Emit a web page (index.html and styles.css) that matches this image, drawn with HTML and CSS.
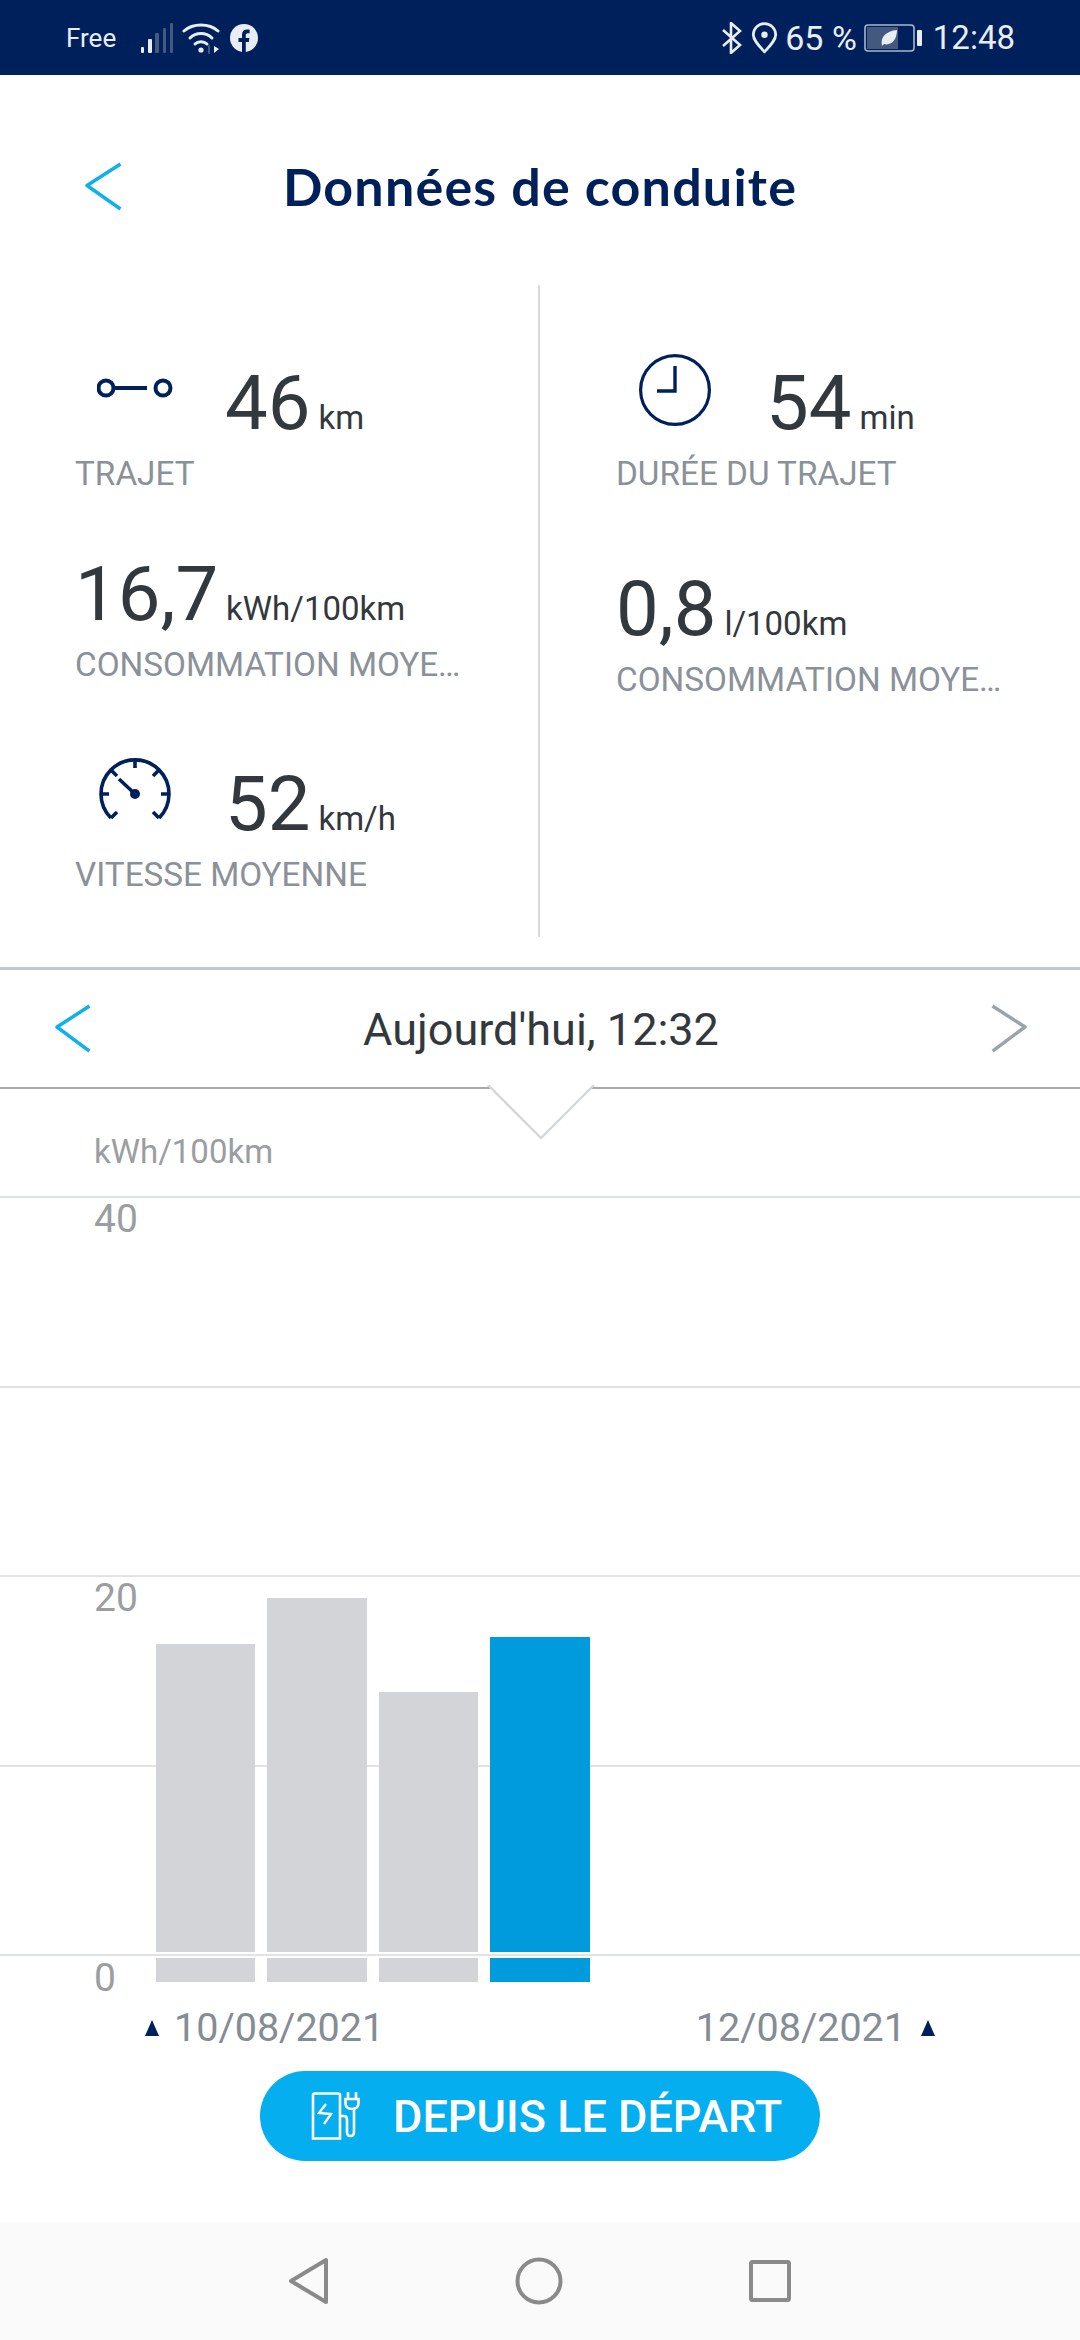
FILE: index.html
```html
<!DOCTYPE html>
<html lang="fr">

  <head>
    <meta charset="utf-8">
    <title>Données de conduite</title>
    <link rel="stylesheet" href="styles.css">
  </head>

  <body>
    <!-- Barre d'état -->
    <div class="status-bar">
      <div class="status-left">
        <span class="carrier">Free</span>
        <svg class="ic-signal" width="33" height="30" viewBox="0 0 33 30">
          <rect x="0" y="24" width="3" height="6" rx="1" fill="#e8edf5"/>
          <rect x="7" y="16" width="4" height="14" rx="1" fill="#e8edf5"/>
          <rect x="14" y="10" width="4" height="20" rx="1" fill="#43597f"/>
          <rect x="22" y="5" width="3" height="25" rx="1" fill="#43597f"/>
          <rect x="29" y="0" width="3" height="30" rx="1" fill="#43597f"/>
        </svg>
        <svg class="ic-wifi" width="38" height="32" viewBox="0 0 38 32" fill="none" stroke="#e8edf5" stroke-width="3" stroke-linecap="round">
          <path d="M2 9 C11 1 27 1 36 9"/>
          <path d="M8 16 C14 10 24 10 30 16"/>
          <path d="M13 22 C16 19 22 19 25 22"/>
          <circle cx="19" cy="28" r="2.6" fill="#e8edf5" stroke="none"/>
          <path d="M32 24 V31 L37 27 Z" fill="#e8edf5" stroke="none"/>
          <path d="M27 24 V31" stroke="#43597f" stroke-width="2"/>
        </svg>
        <svg class="ic-fb" width="28" height="28" viewBox="0 0 28 28">
          <circle cx="14" cy="14" r="14" fill="#e8edf5"/>
          <path d="M12 28 V18 H8.5 V14 H12 V10.8 C12 7.4 14 5.6 17 5.6 C18.4 5.6 19.6 5.8 19.6 5.8 V9.2 H17.9 C16.2 9.2 15.8 10.2 15.8 11.2 V14 H19.4 L18.8 18 H15.8 V28 Z" fill="#00205b"/>
        </svg>
      </div>
      <div class="status-right">
        <svg class="ic-bt" width="20" height="32" viewBox="0 0 20 32" fill="none" stroke="#e8edf5" stroke-width="2.6">
          <path d="M1 8 L18 23 L9 31 V1 L18 9 L1 24"/>
        </svg>
        <svg class="ic-pin" width="27" height="32" viewBox="0 0 25 30" fill="none">
          <path d="M12.5 28 C7 22 2 17 2 12 A10.5 10.5 0 0 1 23 12 C23 17 18 22 12.5 28 Z" stroke="#e8edf5" stroke-width="2.6" stroke-linejoin="round"/>
          <circle cx="12.5" cy="12" r="3" fill="#e8edf5"/>
        </svg>
        <span class="battery-text">65 %</span>
        <svg class="ic-battery" width="58" height="28" viewBox="0 0 58 28">
          <rect x="1" y="1" width="49" height="26" rx="3" fill="none" stroke="#a9b6cc" stroke-width="1.6"/>
          <rect x="3" y="3" width="31" height="22" fill="#43597f"/>
          <rect x="53" y="6" width="5" height="16" rx="1" fill="#e8edf5"/>
          <path d="M18 22 C16 13 22 7 33 6 C33 16 27 22 20 20 Z" fill="#e8edf5"/>
        </svg>
        <span class="clock-text">12:48</span>
      </div>
    </div>

    <!-- En-tête -->
    <div class="header">
      <svg class="chevron-back" width="38" height="50" viewBox="0 0 38 50" fill="none" stroke="#0fb0ec" stroke-width="3.5" stroke-linecap="square" stroke-linejoin="round">
        <path d="M35 3 L3 23.5 L35 46"/>
      </svg>
      <h1 class="title">Données de conduite</h1>
    </div>

    <!-- Statistiques -->
    <div class="stats">
      <div class="stats-col">
        <div class="stat stat-trip">
          <div class="stat-main">
            <div class="stat-icon">
              <svg class="ic-trip" width="76" height="24" viewBox="0 0 76 24" fill="none" stroke="#00205b" stroke-width="4">
                <circle cx="9" cy="12" r="7.5"/>
                <path d="M16 12 H50"/>
                <circle cx="66" cy="12" r="7.5"/>
              </svg>
            </div>
            <span class="num">46</span><span class="unit">km</span>
          </div>
          <div class="stat-label">TRAJET</div>
        </div>
        <div class="stat stat-cons">
          <div class="stat-main">
            <span class="num">16,7</span><span class="unit">kWh/100km</span>
          </div>
          <div class="stat-label">CONSOMMATION MOYE…</div>
        </div>
        <div class="stat stat-speed">
          <div class="stat-main">
            <div class="stat-icon">
              <svg class="ic-gauge" width="72" height="64" viewBox="0 0 72 64" fill="none" stroke="#00205b" stroke-width="3.6">
                <path d="M12 60 A34 34 0 1 1 60 60"/>
                <path d="M36 2 V10 M12 12 L18 18 M60 12 L54 18 M2 36 H10 M70 36 H62 M12 60 L18 54 M60 60 L54 54"/>
                <path d="M20 21 L36 36" stroke-width="3.6"/>
                <circle cx="36" cy="36" r="5" fill="#00205b" stroke="none"/>
              </svg>
            </div>
            <span class="num">52</span><span class="unit">km/h</span>
          </div>
          <div class="stat-label">VITESSE MOYENNE</div>
        </div>
      </div>

      <div class="stats-col stats-col-right">
        <div class="stat stat-time">
          <div class="stat-main">
            <div class="stat-icon">
              <svg class="ic-clock" width="72" height="72" viewBox="0 0 72 72" fill="none" stroke="#00205b" stroke-width="3.2">
                <circle cx="36" cy="36" r="34.4"/>
                <path d="M36 12 V37 H18" stroke-width="3.4"/>
              </svg>
            </div>
            <span class="num">54</span><span class="unit">min</span>
          </div>
          <div class="stat-label">DURÉE DU TRAJET</div>
        </div>
        <div class="stat stat-fuel">
          <div class="stat-main">
            <span class="num">0,8</span><span class="unit">l/100km</span>
          </div>
          <div class="stat-label">CONSOMMATION MOYE…</div>
        </div>
      </div>
    </div>

    <!-- Sélecteur de trajet -->
    <div class="date-row">
      <svg class="chevron" width="38" height="50" viewBox="0 0 38 50" fill="none" stroke="#0fb0ec" stroke-width="3.5" stroke-linecap="square" stroke-linejoin="round">
        <path d="M34 3 L3 23 L34 46"/>
      </svg>
      <span class="date-text">Aujourd'hui, 12:32</span>
      <svg class="chevron" width="38" height="50" viewBox="0 0 38 50" fill="none" stroke="#9aa5aa" stroke-width="3.5" stroke-linecap="square" stroke-linejoin="round">
        <path d="M4 3 L35 23 L4 46"/>
      </svg>
      <svg class="notch" width="108" height="56" viewBox="0 0 108 56">
        <path d="M1 0 L54 53 L107 0 Z" fill="#fff"/>
        <path d="M1 0 L54 53 L107 0" fill="none" stroke="#d4d8db" stroke-width="2.4"/>
      </svg>
    </div>

    <div class="chart-unit">kWh/100km</div>

    <!-- Graphique -->
    <div class="chart">
      <div class="grid-row"><span class="axis-label">40</span></div>
      <div class="grid-row"></div>
      <div class="grid-row"><span class="axis-label">20</span></div>
      <div class="grid-row"></div>
      <div class="grid-row grid-row-last"><span class="axis-label">0</span></div>
      <div class="bars">
        <div class="bar" style="height: 338px"></div>
        <div class="bar" style="height: 384px"></div>
        <div class="bar" style="height: 290px"></div>
        <div class="bar bar-active" style="height: 345px"></div>
      </div>
      <div class="zero-line"></div>
    </div>

    <div class="chart-dates">
      <div class="chart-date"><i class="tick"></i><span>10/08/2021</span></div>
      <div class="chart-date"><span>12/08/2021</span><i class="tick"></i></div>
    </div>

    <button class="pill">
      <svg class="ic-charge" width="50" height="48" viewBox="0 0 50 48" fill="none" stroke="#fff" stroke-width="2.6">
        <path d="M2 46.5 V3 Q2 1.5 3.5 1.5 H27 Q29 1.5 29 3 V46.5 Z"/>
        <path d="M15 12 L8 21 L20 22 L13 32" stroke-width="2.4"/>
        <path d="M29 24 H33 Q36 24 36 28 V40 Q36 44 39.5 44 Q43 44 43 40 V18"/>
        <path d="M37 0 V7 M45 0 V7"/>
        <path d="M34.5 7 H47.5 V11 Q47.5 17 41 17 Q34.5 17 34.5 11 Z"/>
      </svg>
      <span>DEPUIS LE DÉPART</span>
    </button>

    <!-- Navigation système -->
    <div class="nav-bar">
      <svg width="42" height="48" viewBox="0 0 42 48" fill="none" stroke="#8a8a8a" stroke-width="4" stroke-linejoin="round">
        <path d="M38 3 V45 L3 24 Z"/>
      </svg>
      <svg width="48" height="48" viewBox="0 0 48 48" fill="none" stroke="#8a8a8a" stroke-width="4">
        <circle cx="24" cy="24" r="21.5"/>
      </svg>
      <svg width="44" height="44" viewBox="0 0 44 44" fill="none" stroke="#8a8a8a" stroke-width="4" stroke-linejoin="round">
        <rect x="3" y="3" width="38" height="38" rx="1.5"/>
      </svg>
    </div>
  </body>

</html>
```

FILE: styles.css
```css
* {
  box-sizing: border-box;
}

html, body {
  margin: 0;
  padding: 0;
}

body {
  width: 1080px;
  height: 2340px;
  display: flex;
  flex-direction: column;
  overflow: hidden;
  background: #fff;
  font-family: Roboto, "Liberation Sans", sans-serif;
  color: #33383c;
}

/* Barre d'état */
.status-bar {
  height: 75px;
  flex: none;
  display: flex;
  justify-content: space-between;
  align-items: center;
  padding: 0 65px 0 66px;
  background: #00205b;
  color: #e8edf5;
}

.status-left, .status-right {
  display: flex;
  align-items: center;
}

.carrier {
  font-size: 26px;
  width: 75px;
}

.ic-wifi {
  margin-left: 8px;
}

.ic-fb {
  margin-left: 10px;
}

.ic-pin {
  margin-left: 9px;
}

.battery-text {
  margin-left: 7px;
  font-size: 34px;
}

.ic-battery {
  margin-left: 7px;
}

.clock-text {
  margin-left: 11px;
  font-size: 33px;
}

/* En-tête */
.header {
  height: 210px;
  flex: none;
  position: relative;
  display: flex;
  justify-content: center;
  align-items: center;
  padding-top: 12px;
}

.chevron-back {
  position: absolute;
  left: 84px;
  top: 87px;
}

.title {
  margin: 0;
  font-family: Lato, sans-serif;
  font-weight: 700;
  font-size: 52px;
  letter-spacing: 1.2px;
  color: #00205b;
}

/* Statistiques */
.stats {
  height: 652px;
  flex: none;
  display: flex;
}

.stats-col {
  width: 540px;
  padding-left: 75px;
  border-right: 2px solid #d9dcde;
}

.stats-col-right {
  padding-left: 76px;
  border-right: none;
}

.stat-main {
  display: flex;
  align-items: baseline;
  height: 80px;
  line-height: 80px;
}

.stat-icon {
  width: 150px;
  height: 80px;
  flex: none;
  align-self: flex-start;
  position: relative;
}

.stat-icon svg {
  position: absolute;
}

.ic-trip {
  left: 22px;
  top: 13px;
}

.ic-gauge {
  left: 24px;
  top: -6px;
}

.ic-clock {
  left: 23px;
  top: -9px;
}

.num {
  font-size: 76px;
}

.unit {
  margin-left: 8px;
  font-size: 33px;
}

.stat-label {
  margin-top: 11px;
  font-size: 33.3px;
  line-height: 40px;
  color: #8a9199;
  white-space: nowrap;
}

.stat-trip {
  padding-top: 78px;
}

.stat-cons {
  margin-top: 60px;
}

.stat-speed {
  margin-top: 79px;
}

.stat-time {
  padding-top: 78px;
}

.stat-fuel {
  margin-top: 75px;
}

/* Sélecteur de trajet */
.date-row {
  height: 122px;
  flex: none;
  margin-top: 30px;
  padding: 0 52px 0 54px;
  position: relative;
  display: flex;
  justify-content: space-between;
  align-items: center;
  border-top: 3px solid #c0c8ce;
  border-bottom: 2px solid #a8a8a8;
}

.date-text {
  font-size: 45px;
  margin-top: 2px;
}

.notch {
  position: absolute;
  left: 487px;
  top: 100%;
  margin-top: -2px;
}

.chart-unit {
  height: 107px;
  flex: none;
  padding: 43px 0 0 94px;
  font-size: 33px;
  line-height: 40px;
  color: #9a9ea1;
}

/* Graphique */
.chart {
  height: 786px;
  flex: none;
  position: relative;
}

.grid-row {
  height: 189.5px;
  padding: 1px 0 0 94px;
  border-top: 2px solid #e0e3e5;
}

.grid-row-last {
  height: 28px;
  padding-top: 4px;
  border-top: none;
}

.axis-label {
  display: block;
  font-size: 39px;
  line-height: 40px;
  color: #9a9ea1;
}

.bars {
  position: absolute;
  left: 156px;
  bottom: 0;
  display: flex;
  align-items: flex-end;
  gap: 12px;
}

.bar {
  width: 99.4px;
  background: #d2d4d8;
}

.bar-active {
  background: #009bdd;
}

.zero-line {
  position: absolute;
  left: 0;
  right: 0;
  top: 758px;
  height: 2px;
  background: #e0e3e5;
  box-shadow: 0 -2px 0 #fff, 0 2px 0 #fff;
}

.chart-dates {
  flex: none;
  display: flex;
  justify-content: space-between;
  padding: 24px 145px 0;
  font-size: 39.5px;
  line-height: 44px;
  color: #848c94;
}

.chart-date {
  display: flex;
  align-items: center;
  gap: 15px;
}

.tick {
  width: 0;
  height: 0;
  border-left: 7px solid transparent;
  border-right: 7px solid transparent;
  border-bottom: 16px solid #00205b;
}

/* Bouton */
.pill {
  width: 560px;
  height: 90px;
  flex: none;
  margin: 21px auto 0;
  padding: 0 0 0 51px;
  display: flex;
  align-items: center;
  gap: 32px;
  border: none;
  border-radius: 45px;
  background: #04aeef;
  color: #fff;
  font-family: inherit;
  font-size: 45px;
  font-weight: 500;
}

/* Navigation système */
.nav-bar {
  height: 118px;
  flex: none;
  margin-top: auto;
  padding: 0 288px 0 288px;
  display: flex;
  justify-content: space-between;
  align-items: center;
  background: #fafafa;
}
```
